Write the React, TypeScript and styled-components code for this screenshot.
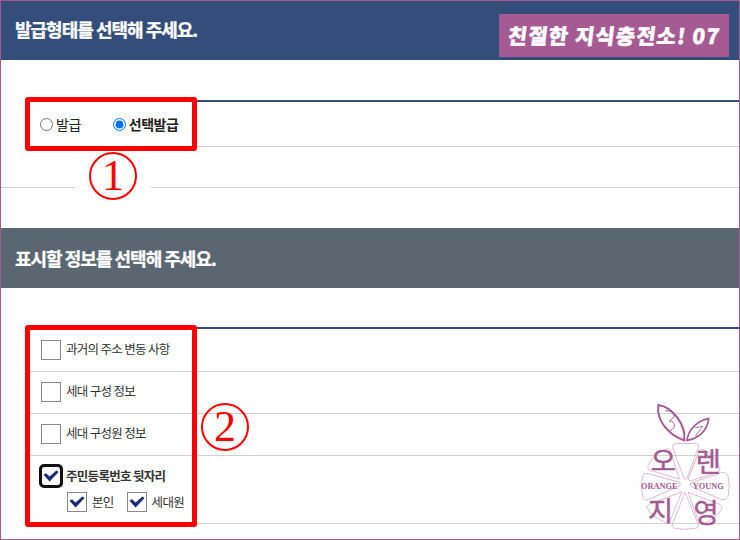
import React from 'react';
import styled, { createGlobalStyle } from 'styled-components';

const GlobalStyle = createGlobalStyle`
  html, body {
    margin: 0;
    padding: 0;
    background: #fff;
  }
  body {
    font-family: 'Noto Sans CJK KR', 'Noto Sans', sans-serif;
  }
`;

const CheckMark = () => (
  <svg width="16" height="12" viewBox="0 0 16 12">
    <path d="M0.5 4.8 L3 3.2 L6.6 6.4 L13.4 0.5 L15.6 2 L6.6 11.4 Z" fill="#1f2a78" />
  </svg>
);

// traced on a 3x grid, so the viewBox is three times the drawn size
const Logo = () => (
  <svg width="120" height="145" viewBox="0 0 360 435">
    <g fill="none" stroke="#a55a93">
      <path d="M115 30 C158 36 198 90 193 136 C150 122 108 80 115 30 Z" strokeWidth="6" />
      <path d="M135 48 C152 44 168 58 160 68 L148 78 C166 80 170 96 150 108" strokeWidth="3" />
      <path d="M201 136 C205 102 235 76 266 71 C262 106 238 130 201 136 Z" strokeWidth="5" />
      <path d="M226 98 L248 94 L226 124" strokeWidth="2.5" />
    </g>
    <g fill="none" stroke="#cfa0c5" strokeWidth="2.2">
      <path d="M158 158 Q156 147 168 146 L226 145 Q238 147 235 158 L200 252 Q197 258 193 252 Z" />
      <path d="M204 252 L238 168 Q242 160 250 164 Q290 182 300 222 Q300 230 292 232 L210 258 Z" />
      <path d="M212 264 L305 233 Q320 230 324 244 Q332 272 324 304 Q318 318 306 314 L212 274 Z" />
      <path d="M204 292 L300 328 Q310 334 304 344 Q284 376 248 386 Q240 388 236 380 Z" />
      <path d="M195 292 L234 386 Q238 398 226 400 Q195 406 166 400 Q154 398 158 386 Z" />
      <path d="M186 290 L150 378 Q146 386 136 382 Q100 368 84 342 Q78 334 88 328 Z" />
      <path d="M180 272 L84 314 Q72 318 68 306 Q60 272 68 244 Q72 232 84 236 L180 262 Z" />
      <path d="M178 252 L90 226 Q80 222 84 212 Q98 180 138 162 Q146 158 150 166 Z" />
    </g>
    <StampText x="130" y="228">오</StampText>
    <StampText x="265" y="232">렌</StampText>
    <StampText x="122" y="377">지</StampText>
    <StampText x="258" y="383">영</StampText>
    <StampLatin x="63" y="282">ORANGE</StampLatin>
    <StampLatin x="218" y="282">YOUNG</StampLatin>
  </svg>
);

const App: React.FC = () => {
  return (
    <Frame>
      <GlobalStyle />
      <Header $tone="#344e7b">
        <Title>발급형태를 선택해 주세요.</Title>
        <Badge>
          <BadgeText>친절한 지식충전소! 07</BadgeText>
        </Badge>
      </Header>

      <FormTable $top={40}>
        <RadioRow>
          <RadioLabel>
            <Radio type="radio" name="kind" readOnly />
            발급
          </RadioLabel>
          <RadioLabel $selected>
            <Radio type="radio" name="kind" defaultChecked />
            선택발급
          </RadioLabel>
        </RadioRow>
      </FormTable>

      <Divider>
        <NumberSlot>
          <Ring>1</Ring>
        </NumberSlot>
      </Divider>

      <Header $tone="#5a6670">
        <Title>표시할 정보를 선택해 주세요.</Title>
      </Header>

      <FormTable $top={39}>
        <CheckRow>
          <Box />
          <CheckText>과거의 주소 변동 사항</CheckText>
        </CheckRow>
        <CheckRow>
          <Box />
          <CheckText>세대 구성 정보</CheckText>
        </CheckRow>
        <CheckRow>
          <Box />
          <CheckText>세대 구성원 정보</CheckText>
        </CheckRow>
        <DetailRow>
          <DetailHead>
            <Box $focused>
              <CheckMark />
            </Box>
            <CheckText $strong>주민등록번호 뒷자리</CheckText>
          </DetailHead>
          <SubOptions>
            <SubOption>
              <Box>
                <CheckMark />
              </Box>
              <CheckText>본인</CheckText>
            </SubOption>
            <SubOption>
              <Box>
                <CheckMark />
              </Box>
              <CheckText>세대원</CheckText>
            </SubOption>
          </SubOptions>
        </DetailRow>
      </FormTable>

      <Callout $top={97} $height={54} />
      <Callout $top={325} $height={202} />
      <SecondRing>2</SecondRing>
      <LogoSpot>
        <Logo />
      </LogoSpot>
    </Frame>
  );
};

export default App;

const Frame = styled.div`
  position: relative;
  width: 740px;
  height: 540px;
  box-sizing: border-box;
  border: 1px solid #a55a93;
  overflow: hidden;
  background: #fff;
`;

const Header = styled.div<{ $tone: string }>`
  height: 60px;
  padding: 0 10px 0 14px;
  box-sizing: border-box;
  display: flex;
  align-items: center;
  justify-content: space-between;
  background: ${(p) => p.$tone};
  &:first-of-type {
    height: 59px;
    align-items: flex-start;
  }
`;

const Title = styled.h2`
  margin: 0;
  color: #fff;
  font-size: 18px;
  font-weight: 700;
  line-height: 56px;
  letter-spacing: -1px;
  -webkit-text-stroke: 0.3px #fff;
`;

const Badge = styled.div`
  margin-top: 13px;
  width: 230px;
  height: 43px;
  box-sizing: border-box;
  background: #a55a93;
  text-align: center;
`;

const BadgeText = styled.span`
  display: inline-block;
  color: #fff;
  font-size: 21px;
  font-weight: 900;
  line-height: 43px;
  letter-spacing: 1.1px;
  white-space: nowrap;
  transform: skewX(-7deg);
  -webkit-text-stroke: 0.4px #fff;
`;

const FormTable = styled.div<{ $top: number }>`
  margin: ${(p) => p.$top}px 0 0 28px;
  border-top: 2px solid #344e7b;
`;

const RadioRow = styled.div`
  height: 45px;
  padding-left: 11px;
  box-sizing: border-box;
  display: flex;
  align-items: center;
  gap: 32px;
  border-bottom: 1px solid #d0d0d0;
`;

const RadioLabel = styled.label<{ $selected?: boolean }>`
  display: flex;
  align-items: center;
  gap: 3px;
  font-size: 14px;
  letter-spacing: -0.5px;
  color: #222;
  font-weight: ${(p) => (p.$selected ? 700 : 400)};
`;

const Radio = styled.input`
  width: 13px;
  height: 13px;
  margin: 0;
`;

const Divider = styled.div`
  position: relative;
  height: 1px;
  margin-top: 40px;
  margin-bottom: 40px;
  background: #d0d0d0;
`;

const NumberSlot = styled.div`
  position: absolute;
  left: 74px;
  top: -35px;
  width: 76px;
  height: 52px;
  display: flex;
  justify-content: center;
  background: #fff;
`;

const Ring = styled.span`
  width: 48px;
  height: 48px;
  box-sizing: border-box;
  border: 2.5px solid #f00;
  border-radius: 50%;
  color: #f00;
  font-family: 'Liberation Serif', serif;
  font-size: 44px;
  line-height: 43px;
  text-align: center;
`;

const SecondRing = styled(Ring)`
  position: absolute;
  left: 200px;
  top: 402px;
`;

const CheckRow = styled.div`
  height: 42px;
  padding: 10px 0 0 12px;
  box-sizing: border-box;
  display: flex;
  gap: 5px;
  border-bottom: 1px solid #d0d0d0;
  &:first-child {
    height: 43px;
    padding-top: 11px;
  }
`;

const DetailRow = styled.div`
  height: 68px;
  padding: 10px 0 0 12px;
  box-sizing: border-box;
  border-bottom: 1px solid #d0d0d0;
`;

const DetailHead = styled.div`
  display: flex;
  align-items: center;
  gap: 5px;
`;

const SubOptions = styled.div`
  display: flex;
  gap: 13px;
  margin: 6px 0 0 26px;
`;

const SubOption = styled.div`
  display: flex;
  align-items: center;
  gap: 5px;
`;

const Box = styled.span<{ $focused?: boolean }>`
  flex: none;
  width: 20px;
  height: 20px;
  box-sizing: border-box;
  border: 1px solid #8a8a8a;
  display: flex;
  align-items: center;
  justify-content: center;
  background: #fff;
  ${(p) => p.$focused && 'outline: 3px solid #111; outline-offset: -1px; border-radius: 3px;'}
`;

const CheckText = styled.span<{ $strong?: boolean }>`
  font-size: 12.5px;
  letter-spacing: -0.7px;
  line-height: 18px;
  white-space: nowrap;
  color: #333;
  font-weight: ${(p) => (p.$strong ? 700 : 400)};
`;

const Callout = styled.div<{ $top: number; $height: number }>`
  position: absolute;
  left: 24px;
  top: ${(p) => p.$top - 1}px;
  width: 172px;
  height: ${(p) => p.$height}px;
  box-sizing: border-box;
  border: 5px solid #f00;
  border-radius: 3px;
`;

const LogoSpot = styled.div`
  position: absolute;
  left: 619px;
  top: 394px;
  line-height: 0;
`;

const StampText = styled.text`
  fill: #a55a93;
  stroke: #a55a93;
  stroke-width: 1.5px;
  font-family: 'Noto Sans CJK KR', sans-serif;
  font-size: 82px;
  text-anchor: middle;
`;

const StampLatin = styled.text`
  fill: #a55a93;
  font-family: 'Liberation Serif', serif;
  font-size: 25px;
  font-weight: 700;
`;
